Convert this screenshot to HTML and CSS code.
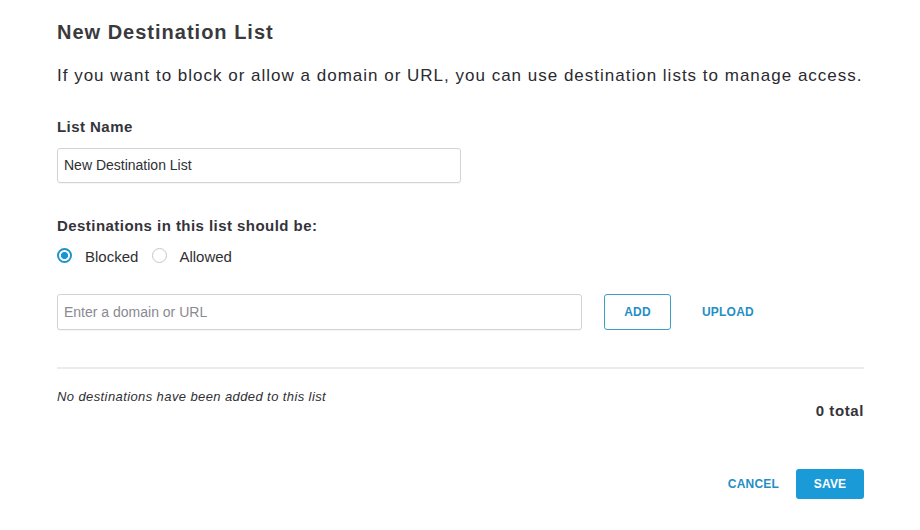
FILE: index.html
```html
<!DOCTYPE html>
<html>
<head>
<meta charset="utf-8">
<link rel="stylesheet" href="styles.css">
</head>
<body>
<div class="page">
  <h1 class="title">New Destination List</h1>
  <p class="intro">If you want to block or allow a domain or URL, you can use destination lists to manage access.</p>

  <div class="field">
    <div class="label">List Name</div>
    <div class="input name-input">New Destination List</div>
  </div>

  <div class="field mode">
    <div class="label">Destinations in this list should be:</div>
    <div class="radios">
      <span class="radio checked"></span><span class="radio-label">Blocked</span>
      <span class="radio"></span><span class="radio-label">Allowed</span>
    </div>
  </div>

  <div class="add-row">
    <div class="input domain-input placeholder">Enter a domain or URL</div>
    <div class="btn-outline">ADD</div>
    <div class="link">UPLOAD</div>
  </div>

  <div class="divider"></div>

  <div class="list-status">
    <div class="empty">No destinations have been added to this list</div>
    <div class="total">0 total</div>
  </div>

  <div class="actions">
    <div class="link cancel">CANCEL</div>
    <div class="btn-primary">SAVE</div>
  </div>
</div>
</body>
</html>
```

FILE: styles.css
```css
html, body {
  margin: 0;
  padding: 0;
  background: #ffffff;
}
body {
  font-family: "Liberation Sans", Arial, sans-serif;
  color: #2f2f33;
}
.page {
  width: 807px;
  padding: 20px 0 0 57px;
  display: flex;
  flex-direction: column;
}
.title {
  margin: 0;
  font-size: 20px;
  line-height: 24px;
  font-weight: 600;
  letter-spacing: 1px;
  color: #3a3a3e;
}
.intro {
  margin: 22px 0 0;
  font-size: 17px;
  line-height: 20px;
  letter-spacing: 1px;
  color: #2a2a30;
}
.field {
  margin-top: 32px;
  display: flex;
  flex-direction: column;
}
.label {
  font-size: 15px;
  line-height: 18px;
  font-weight: bold;
  letter-spacing: 0.45px;
  color: #34343a;
}
.input {
  box-sizing: border-box;
  height: 36px;
  border: 1px solid #d3d3d6;
  border-radius: 3px;
  padding: 0 6px;
  font-size: 14px;
  line-height: 34px;
  color: #2f2f33;
  box-shadow: 0 1px 1px rgba(0,0,0,0.04);
}
.name-input {
  width: 404px;
  height: 35px;
  line-height: 33px;
  margin-top: 12px;
}
.mode {
  margin-top: 34px;
}
.radios {
  display: flex;
  align-items: center;
  height: 18px;
  margin-top: 13px;
  font-size: 15px;
  color: #2f2f33;
}
.radio {
  box-sizing: border-box;
  width: 15px;
  height: 15px;
  border-radius: 50%;
  border: 1px solid #c6c6ca;
  background: #fff;
  margin-right: 12px;
  margin-bottom: 4px;
}
.radio.checked {
  border: 2px solid #1b95d0;
  background: radial-gradient(circle, #1b95d0 0 3.3px, #ffffff 3.8px);
  margin-right: 13px;
}
.radio-label {
  margin-right: 14px;
  line-height: 18px;
}
.add-row {
  display: flex;
  align-items: center;
  margin-top: 28px;
}
.domain-input {
  width: 525px;
}
.placeholder {
  color: #8a8a90;
}
.btn-outline {
  box-sizing: border-box;
  margin-left: 22px;
  width: 67px;
  height: 36px;
  border: 1.5px solid #3b9fc4;
  border-radius: 3px;
  display: flex;
  align-items: center;
  justify-content: center;
  font-size: 12px;
  font-weight: bold;
  color: #1f8fc4;
  letter-spacing: 0.2px;
}
.link {
  font-size: 12px;
  font-weight: bold;
  color: #1f8fc4;
  letter-spacing: 0.2px;
}
.add-row .link {
  margin-left: 31px;
}
.divider {
  margin-top: 37px;
  height: 2px;
  background: #ececee;
}
.list-status {
  display: flex;
  justify-content: space-between;
  align-items: flex-start;
  margin-top: 20px;
}
.empty {
  font-size: 13px;
  font-style: italic;
  line-height: 16px;
  letter-spacing: 0.4px;
  color: #2f2f33;
}
.total {
  margin-top: 13px;
  font-size: 15px;
  font-weight: bold;
  letter-spacing: 0.6px;
  color: #34343a;
}
.actions {
  display: flex;
  justify-content: flex-end;
  align-items: center;
  margin-top: 50px;
}
.cancel {
  margin-right: 17px;
}
.btn-primary {
  box-sizing: border-box;
  width: 68px;
  height: 30px;
  border-radius: 3px;
  background: #1a9bd7;
  color: #ffffff;
  font-size: 12px;
  font-weight: bold;
  display: flex;
  align-items: center;
  justify-content: center;
  letter-spacing: 0.2px;
}
```
